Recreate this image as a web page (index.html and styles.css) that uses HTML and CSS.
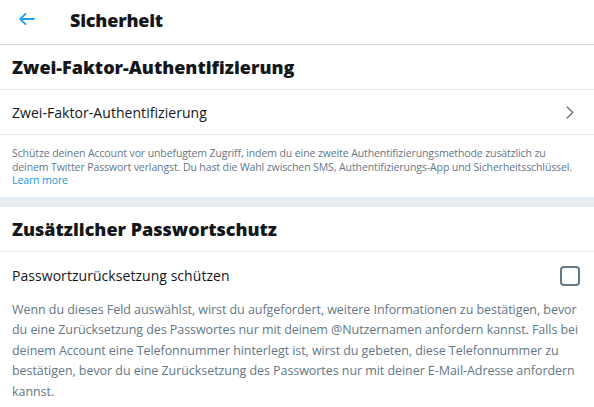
FILE: index.html
```html
<!DOCTYPE html>
<html lang="de">
<head>
<meta charset="utf-8">
<title>Sicherheit</title>
<link rel="stylesheet" href="styles.css">
</head>
<body>
<header class="topbar">
  <button class="back" aria-label="Zurück">
    <svg viewBox="0 0 16 12" width="16" height="12"><path d="M1 6h14M6.5 0.8L1.2 6l5.3 5.2" fill="none" stroke="#1da1f2" stroke-width="1.8" stroke-linecap="round" stroke-linejoin="round"/></svg>
  </button>
  <h1 class="title">Sicherheit</h1>
</header>
<section class="section">
  <h2 class="section-head">Zwei-Faktor-Authentifizierung</h2>
  <a class="row" href="#">
    <span class="row-label">Zwei-Faktor-Authentifizierung</span>
    <svg class="chevron" viewBox="0 0 8 13" width="8" height="13"><path d="M1.2 1l5.6 5.5-5.6 5.5" fill="none" stroke="#657786" stroke-width="1.5" stroke-linecap="round" stroke-linejoin="round"/></svg>
  </a>
  <p class="note">Schütze deinen Account vor unbefugtem Zugriff, indem du eine zweite Authentifizierungsmethode zusätzlich zu deinem Twitter Passwort verlangst. Du hast die Wahl zwischen SMS, Authentifizierungs-App und Sicherheitsschlüssel. <a class="link" href="#">Learn more</a></p>
</section>
<div class="spacer"></div>
<section class="section">
  <h2 class="section-head">Zusätzlicher Passwortschutz</h2>
  <div class="check-row">
    <span class="row-label">Passwortzurücksetzung schützen</span>
    <span class="checkbox"></span>
  </div>
  <p class="help">Wenn du dieses Feld auswählst, wirst du aufgefordert, weitere Informationen zu bestätigen, bevor du eine Zurücksetzung des Passwortes nur mit deinem @Nutzernamen anfordern kannst. Falls bei deinem Account eine Telefonnummer hinterlegt ist, wirst du gebeten, diese Telefonnummer zu bestätigen, bevor du eine Zurücksetzung des Passwortes nur mit deiner E-Mail-Adresse anfordern kannst.</p>
</section>
</body>
</html>
```
FILE: styles.css
```css
* { box-sizing: border-box; }
html, body { margin: 0; padding: 0; background: #fff; }
body {
  font-family: "Open Sans", "Noto Sans", sans-serif;
  color: #14171a;
  width: 594px;
}
.topbar {
  height: 45px;
  display: flex;
  align-items: center;
  border-bottom: 1px solid #ccd6dd;
}
.back {
  border: 0;
  background: none;
  padding: 0;
  margin-left: 19px;
  width: 16px;
  height: 12px;
  display: flex;
  margin-top: -6px;
}
.title {
  margin: 0 0 0 35px;
  font-size: 18px;
  font-weight: 800;
  margin-top: -4px;
  letter-spacing: -0.2px;
}
.section-head {
  margin: 0;
  height: 45px;
  padding: 0 12px;
  display: flex;
  align-items: center;
  font-size: 18px;
  font-weight: 800;
  border-bottom: 1px solid #e6ecf0;
  letter-spacing: 0;
}
.row {
  height: 45px;
  padding: 0 20px 0 12px;
  display: flex;
  align-items: center;
  justify-content: space-between;
  border-bottom: 1px solid #e6ecf0;
  text-decoration: none;
  color: #14171a;
}
.row-label {
  font-size: 14px;
  letter-spacing: 0.05px;
}
.chevron { display: block; }
.note {
  margin: 0;
  padding: 12px 12px 9px;
  font-size: 10.5px;
  line-height: 13.5px;
  color: #657786;
  letter-spacing: -0.1px;
}
.link { color: #1b95e0; text-decoration: none; }
.spacer { height: 10px; background: #e6ecf0; }
.check-row {
  height: 48px;
  padding: 0 14px 0 12px;
  display: flex;
  align-items: center;
  justify-content: space-between;
}
.checkbox {
  width: 20px;
  height: 20px;
  border: 2px solid #657786;
  border-radius: 4px;
}
.help {
  margin: 0;
  padding: 0 12px;
  font-size: 12.5px;
  line-height: 20.5px;
  color: #657786;
  letter-spacing: -0.06px;
}
```
